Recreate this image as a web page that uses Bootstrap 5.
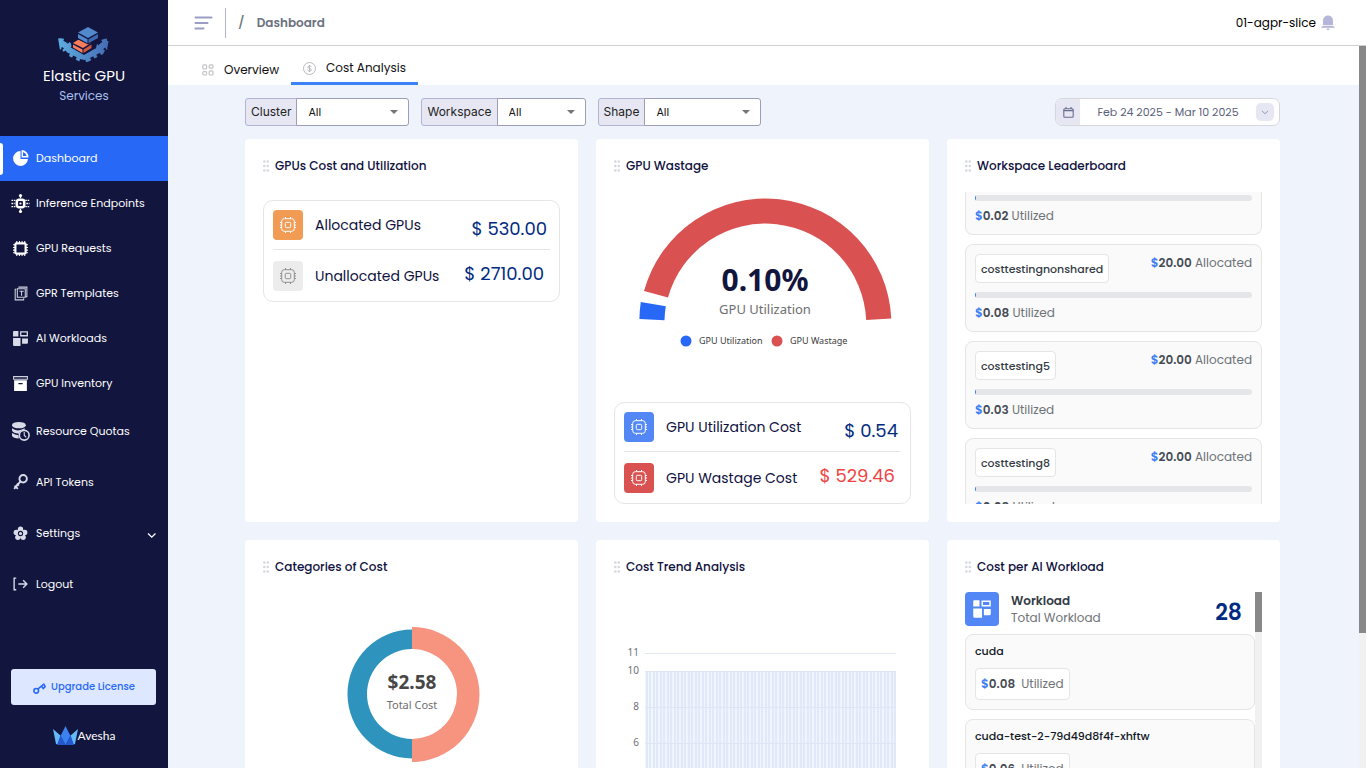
<!DOCTYPE html>
<html lang="en">
<head>
<meta charset="utf-8">
<meta name="viewport" content="width=device-width, initial-scale=1">
<title>Elastic GPU Services - Cost Analysis</title>
<link rel="stylesheet" href="https://cdn.jsdelivr.net/npm/bootstrap@5.3.0/dist/css/bootstrap.min.css">
<style>
:root{--navy:#12153d;--blue:#2769f6;--price:#002b80;--line:#e5e5e5}
body{font-family:Poppins,Inter,"Open Sans",sans-serif;font-size:12px;line-height:18px;color:#0f1140;background:#eff4fc}
.sidebar{width:168px;background:var(--navy);color:#fff}
.brand{height:136px;padding-top:26px}
.brand-name{font-size:15px;line-height:24px}
.brand-sub{font-size:12px;line-height:16px;color:#a9bfec}
.side-link{height:45px;padding:0 12px 1px;gap:7px;color:#fff;font-size:11px;text-decoration:none}
.side-link svg{width:17px;height:17px;flex:none;overflow:visible}
.side-link.tall{height:51px}
.side-link.active{background:var(--blue);position:relative}
.side-link.active::before{content:"";position:absolute;left:0;top:7px;bottom:6px;width:3px;background:#fff;border-radius:0 3px 3px 0}
.soft{color:#d9dbe8}
.upgrade{height:36px;margin:0 12px 0 11px;background:#dde7ff;color:var(--blue);border:0;border-radius:3px;font-size:10px;font-weight:500}
.avesha{height:63px;padding-bottom:1px;font-family:Lato,sans-serif;font-size:12px}
.topbar{height:46px;border-bottom:1px solid #d0d0d0;padding:0 30px 0 26px}
.topbar .rule{width:1px;height:30px;background:#b3b3d6;margin:0 12px}
.slash{font-size:13px;font-weight:500}
.crumb{color:#6c7280;font-weight:600}
.tabs{height:39px;padding-left:22px}
.tab{color:#111;text-decoration:none;height:39px;padding:0 12px;gap:10px}
.tab.active{border-bottom:3px solid #3b82f6}
.scrollrail{width:7px;background:#f1f1f1}
.scrollrail div{background:#888;height:587px}
.content{padding:13px 79px 0 77px}
.filters{gap:12px;margin-bottom:13px}
.filter{height:28px;width:auto}
.filter label{background:#e6e7f3;border:1px solid #b3b3d3;border-radius:3px 0 0 3px;padding:0 5px;color:#222;font-family:Inter,sans-serif}
.filter .form-select{flex:none;border:1px solid #9d9eb6;border-radius:3px;margin-left:-1px;padding:0 11px;font-size:11px;line-height:16px;color:#111;background:#fff url("data:image/svg+xml,%3Csvg xmlns='http://www.w3.org/2000/svg' viewBox='0 0 8 5'%3E%3Cpath d='M0 0h8L4 4z' fill='%23757575'/%3E%3C/svg%3E") no-repeat right 10px center/8px 5px}
.filter .sel-a{width:113px}.filter .sel-b{width:89px}.filter .sel-c{width:117px}
.daterange{width:225px;height:28px;border:1px solid #d6d7db;border-radius:7px;background:#fff;color:#5b5f7b;font-size:11px;padding:0;overflow:hidden}
.daterange .cal{width:24px;height:100%;background:#e6e7f3}
.daterange .chev{width:18px;height:18px;border-radius:5px;background:#e6e7f3;margin-right:5px}
.board{--bs-gutter-x:18px;--bs-gutter-y:18px}
.panel{background:#fff;border-radius:4px;height:383px;padding:18px}
.panel h2{font-size:12px;line-height:18px;font-weight:500;margin:0;gap:6px}
.panel h2 svg{width:6px;height:12px;fill:#d5d7df}
.costbox{border:1px solid var(--line);border-radius:10px;padding:0 9px}
.costrow{height:48px}
.costrow + .costrow{height:52px;border-top:1px solid var(--line)}
.costrow .name{font-size:14px}
.costrow .price{font-size:18px;color:var(--price);padding:8px 3px 0 0}
.costrow + .costrow .price{padding:0 6px 4px 0}
.costrow .price.lost{color:#f04444}
.tile{width:30px;height:30px;border-radius:4px;color:#fff;margin-right:12px}
.orange{background:#f29b55}.grey{background:#ececec;color:#909090}.sky{background:#5287f5}.red{background:#d95151}
.mt-box{margin-top:25px}
.chart{font-family:"Noto Sans","Open Sans",sans-serif}
.board-list{height:312px;margin-top:17px;gap:9px;overflow:hidden}
.entry{flex:none;background:#fafafa;border:1px solid var(--line);border-radius:8px;padding:9px;color:#6e7277}
.entry.cut{border-top:0;border-radius:0 0 8px 8px;padding-top:3px}
.entry b{font-weight:600;color:#454b54}
.entry b i{font-style:normal;color:#3b7df6}
.chip{background:#fff;border:1px solid var(--line);border-radius:4px;height:29px;padding:0 5px;font-size:11px;font-weight:500;color:#353b44}
.meter{height:6px;background:#e5e6ea;border-radius:3px;overflow:hidden}
.meter div{height:6px;background:#3b82f6}
.entry .meter{margin:9px 0 6px}
.entry.cut .meter{margin-top:0}
.work{height:313px;margin-top:16px;overflow:hidden}
.work .tile{width:34px;height:34px}
.work .caption{color:#6e7277;line-height:17px}
.work .caption div{color:#333a45;font-weight:600}
.work .total{font-size:22px;height:34px;line-height:42px;font-weight:600;color:var(--price);margin-right:13px}
.work .entry{margin-top:8px;height:76px;padding-top:8px}
.work .entry + .entry{margin-top:9px}
.work .entry h3{font-size:11px;line-height:16px;font-weight:500;color:#111827;margin:0 0 9px}
.work .chip{height:32px;font-size:12px;font-weight:400;color:#6e7277;gap:6px}
.work .scrollrail div{height:40px}
</style>
</head>
<body class="vh-100 overflow-hidden d-flex">
<svg class="d-none" xmlns="http://www.w3.org/2000/svg">
  <symbol id="grip" viewBox="0 0 6 12"><circle cx="1.3" cy="1.5" r="1.3"/><circle cx="4.8" cy="1.5" r="1.3"/><circle cx="1.3" cy="6" r="1.3"/><circle cx="4.8" cy="6" r="1.3"/><circle cx="1.3" cy="10.5" r="1.3"/><circle cx="4.8" cy="10.5" r="1.3"/></symbol>
  <symbol id="cpu" viewBox="0 0 16 16"><g fill="none" stroke="currentColor"><rect x="1.7" y="1.7" width="12.6" height="12.6" rx="2.6"/><rect x="5.3" y="5.3" width="5.4" height="5.4" rx="1"/><path d="M5.5 0v1.7M10.5 0v1.7M5.5 14.3V16M10.5 14.3V16M0 5.5h1.7M0 8h1.7M0 10.5h1.7M14.3 5.5H16M14.3 8H16M14.3 10.5H16"/></g></symbol>
  <symbol id="blocks" viewBox="0 0 16 16"><path fill="currentColor" d="M1.500 1H6v5H1V1.500zM1 7.500h7V15H2a1 1 0 0 1-1-1zM9.500 8H15v4a1 1 0 0 1-1 1H9.500z"/><path fill="none" stroke="currentColor" stroke-width="1.200" d="M8.200 1.800h6.200v3.600H8.200z"/></symbol>
</svg>

<aside class="sidebar d-flex flex-column flex-shrink-0 vh-100">
  <div class="brand text-center">
    <svg width="54" height="38" viewBox="0 0 54 38" class="d-block mx-auto">
      <defs><linearGradient id="gear" gradientUnits="userSpaceOnUse" x1="0" y1="0" x2="54" y2="0"><stop stop-color="#5eaee0"/><stop offset="1" stop-color="#4468b2"/></linearGradient></defs>
      <g fill="none" stroke="url(#gear)"><path stroke-width="6" d="M3 18Q8 17 12 24L22 29Q27 33 32 29L42 24Q46 17 51 18"/><path stroke-width="11" stroke-dasharray="3.500 4" d="M2 18Q8 17 12 24L22 29Q27 33 32 29L42 24Q46 17 52 18"/></g>
      <path fill="#12153d" d="M14 18l13-6 13 6-1 4-12 7-12-7z"/>
      <path fill="#fa7d5b" d="M16 17l8-5 10 5-8 5zM16 18.500l9.500 5V27L16 21.500z"/><path fill="#cf5843" d="M26.500 23.500l8-5v3.500l-8 5z"/>
      <path fill="#12153d" d="M20 6v7l11 5.500 12-5V6z"/>
      <path fill="#5288cc" d="M21 6.500L31 1l10 5.500-10 5.500zM21 8l9.500 5.200v4L21 12z"/><path fill="#3d68b0" d="M31.500 13.200L41 8v4l-9.500 5.200z"/>
    </svg>
    <div class="brand-name">Elastic GPU</div>
    <div class="brand-sub">Services</div>
  </div>
  <nav class="d-flex flex-column">
    <a href="#" class="side-link active d-flex align-items-center"><svg viewBox="0 0 16 16" fill="#fff"><path d="M8 1a7 7 0 1 0 7 7.500H8zM9 0v7h6.500A6.500 6.500 0 0 0 9 0zm1.400 1.800a5 5 0 0 1 3.400 3.800h-3.400z" fill-rule="evenodd"/></svg>Dashboard</a>
    <a href="#" class="side-link d-flex align-items-center"><svg viewBox="0 0 16 16"><rect x="4.500" y="4.500" width="7" height="7" rx="2" fill="none" stroke="#fff" stroke-width="2.400"/><circle cx="8" cy="8" r="1" fill="#fff"/><path d="M8 0v3M8 13v3" stroke="#fff" stroke-width="1.200"/><path d="M-.5 5h4M-.5 8h3M-.5 11h4M12.500 5h4M13.500 8h3M12.500 11h4" stroke="#fff" stroke-dasharray="1.500 .7" stroke-width="1.200"/><circle cx="8" cy=".5" r="1.500" fill="#fff"/><circle cx="8" cy="15.500" r="1.500" fill="#fff"/></svg>Inference Endpoints</a>
    <a href="#" class="side-link d-flex align-items-center"><svg viewBox="0 0 16 16" fill="none" stroke="#fff"><rect x="3.200" y="3.200" width="9.600" height="9.600" rx="1" stroke-width="2"/><path d="M4.500 1v2M7 1v2M9.500 1v2M12 1v2M4.500 13v2M7 13v2M9.500 13v2M12 13v2M1 4.500h2M1 7h2M1 9.500h2M1 12h2M13 4.500h2M13 7h2M13 9.500h2M13 12h2"/></svg>GPU Requests</a>
    <a href="#" class="side-link d-flex align-items-center"><svg viewBox="0 0 16 16" fill="none" stroke="#cfd1de"><path d="M6 2h8v9h-2M4 4H3v10h8v-1.500M5 3.500h7.500v8H5zM7 5.800h4M9 5.800V10"/></svg>GPR Templates</a>
    <a href="#" class="side-link d-flex align-items-center"><svg viewBox="0 0 16 16" class="soft"><use href="#blocks"/></svg>AI Workloads</a>
    <a href="#" class="side-link d-flex align-items-center"><svg viewBox="0 0 16 16"><path d="M1.500 1.500h13v2.500h-13z" fill="none" stroke="#cfd1de"/><path fill="#fff" fill-rule="evenodd" d="M2 5h12v10H2zM6 7.500v1.200h4V7.500z"/></svg>GPU Inventory</a>
    <a href="#" class="side-link tall d-flex align-items-center"><svg viewBox="0 0 16 16" fill="#d9dbe8"><ellipse cx="6.500" cy="2" rx="6.500" ry="3"/><path d="M0 5q5 4 12 0v1Q7 7 6.500 10 1 9.500 0 7zM0 9.500q3 2 6 2l.5 3Q1 14.500 0 12z"/><circle cx="11.500" cy="11.500" r="4.600" fill="none" stroke="#d9dbe8" stroke-width="1.500"/><path d="M11.500 8.500v3l1.800 2" fill="none" stroke="#d9dbe8"/></svg>Resource Quotas</a>
    <a href="#" class="side-link tall d-flex align-items-center"><svg viewBox="0 0 16 16" fill="none" stroke="#d9dbe8" stroke-width="1.800"><circle cx="10.500" cy="4.500" r="3.500"/><path d="M8 7l-6 7M2.500 11l3 3M4.500 9l2 2"/></svg>API Tokens</a>
    <a href="#" class="side-link tall d-flex align-items-center"><svg viewBox="0 0 16 16"><g fill="#d9dbe8"><circle cx="8" cy="4" r="2.500"/><circle cx="4" cy="7" r="2.500"/><circle cx="12" cy="7" r="2.500"/><circle cx="5.500" cy="11.500" r="2.500"/><circle cx="10.500" cy="11.500" r="2.500"/><circle cx="8" cy="8" r="4"/></g><circle cx="8" cy="8" r="2" fill="none" stroke="#12153d"/></svg><span class="flex-grow-1">Settings</span><svg viewBox="0 0 16 16" fill="none" stroke="#fff" stroke-width="1.200"><path d="M8.500 8l3.500 3.500L15.500 8"/></svg></a>
    <a href="#" class="side-link tall d-flex align-items-center"><svg viewBox="0 0 16 16" fill="none" stroke="#d9dbe8" stroke-width="1.300"><path d="M4 2H2v11h2M6 7.500h8M10.500 4L14 7.500 10.500 11"/></svg>Logout</a>
  </nav>
  <button type="button" class="upgrade mt-auto d-flex align-items-center justify-content-center gap-1"><svg width="15" height="15" viewBox="0 0 16 16" fill="none" stroke="#2769f6" stroke-width="1.700"><circle cx="4.500" cy="11.500" r="2.500"/><path d="M6.500 9.500L13 4M10 6.500l2 2.500 2-2-1.500-3"/></svg>Upgrade License</button>
  <div class="avesha d-flex align-items-center justify-content-center"><svg width="25" height="20" viewBox="0 0 25 20"><path fill="#66b8f7" d="M0 3l8 7-1 9-4-1zM25 3l-8 7 1 9 4-1z"/><path fill="#3b82f0" d="M12.500 0l5 10-5 9-5-9z"/><path fill="#2359cf" d="M7.500 9l5 10H4zM17.500 9l-5 10H21z"/></svg>Avesha</div>
</aside>

<div class="flex-grow-1 d-flex flex-column vh-100">
  <header class="topbar bg-white d-flex align-items-center flex-shrink-0">
    <button type="button" class="btn p-0 border-0 lh-1" aria-label="Toggle menu"><svg width="19" height="14" viewBox="0 0 19 14" stroke="#9a9dc4" stroke-width="2" stroke-linecap="round"><path d="M1.500 1.500h16M1.500 7h12M1.500 12.500h8"/></svg></button>
    <span class="rule"></span>
    <span class="slash text-secondary me-2">/</span>
    <span class="crumb ms-1">Dashboard</span>
    <span class="ms-auto text-black me-1">01-agpr-slice</span>
    <svg width="16" height="16" viewBox="0 0 16 16" fill="#b5b5d8"><path d="M8 .5A5 5 0 0 0 3 5.500V10h10V5.500A5 5 0 0 0 8 .5zM3 10.700L.8 12.700h14.400L13 10.700zM6.500 13.500h3a1.500 1.800 0 0 1-3 0z"/></svg>
  </header>
  <div class="d-flex flex-grow-1 overflow-hidden">
    <main class="flex-grow-1">
      <nav class="tabs bg-white d-flex">
        <a href="#" class="tab d-flex align-items-center pt-2"><svg width="12" height="12" viewBox="0 0 12 12" fill="none" stroke="#c3c3c7" stroke-width="1.200"><rect x=".8" y=".8" width="3.800" height="4.200" rx="1"/><rect x="7.200" y=".8" width="3.800" height="3.400" rx="1"/><rect x=".8" y="7.600" width="3.800" height="3.400" rx="1"/><rect x="7.200" y="6.800" width="3.800" height="4.200" rx="1"/></svg>Overview</a>
        <a href="#" class="tab active d-flex align-items-center pt-2"><svg width="13" height="13" viewBox="0 0 13 13" fill="none" stroke="#b9b9be"><circle cx="6.500" cy="6.500" r="6"/><path d="M8.500 4.800C8 3.600 4.800 3.600 4.800 5.200s3.600 1 3.600 2.700S5 9.300 4.500 8M6.500 3v7"/></svg>Cost Analysis</a>
      </nav>
      <div class="content">
        <form class="filters d-flex">
          <div class="filter input-group flex-nowrap"><label class="d-flex align-items-center" for="cluster">Cluster</label><select id="cluster" class="form-select sel-a"><option>All</option></select></div>
          <div class="filter input-group flex-nowrap"><label class="d-flex align-items-center" for="workspace">Workspace</label><select id="workspace" class="form-select sel-b"><option>All</option></select></div>
          <div class="filter input-group flex-nowrap"><label class="d-flex align-items-center" for="shape">Shape</label><select id="shape" class="form-select sel-c"><option>All</option></select></div>
          <button type="button" class="daterange ms-auto d-flex align-items-center">
            <span class="cal d-flex align-items-center justify-content-center"><svg width="11" height="11" viewBox="0 0 11 11" fill="none" stroke="#6a6d8e" stroke-width="1.100"><rect x=".8" y="1.800" width="9.400" height="8.400" rx="1"/><path d="M.8 3.600h9.400M3 0v2M8 0v2"/></svg></span>
            <span class="flex-grow-1 text-center">Feb 24 2025 - Mar 10 2025</span>
            <span class="chev d-flex align-items-center justify-content-center"><svg width="8" height="5" viewBox="0 0 8 5" fill="none" stroke="#9093b5"><path d="M1 .8l3 3 3-3"/></svg></span>
          </button>
        </form>
        <div class="row row-cols-3 board">
          <div class="col"><section class="panel">
            <h2 class="d-flex align-items-center"><svg><use href="#grip"/></svg>GPUs Cost and Utilization</h2>
            <div class="costbox mt-box">
              <div class="costrow d-flex align-items-center"><span class="tile orange d-flex align-items-center justify-content-center"><svg width="16" height="16"><use href="#cpu"/></svg></span><span class="name">Allocated GPUs</span><span class="price ms-auto">$ 530.00</span></div>
              <div class="costrow d-flex align-items-center"><span class="tile grey d-flex align-items-center justify-content-center"><svg width="16" height="16"><use href="#cpu"/></svg></span><span class="name">Unallocated GPUs</span><span class="price ms-auto">$ 2710.00</span></div>
            </div>
          </section></div>
          <div class="col"><section class="panel d-flex flex-column">
            <h2 class="d-flex align-items-center"><svg><use href="#grip"/></svg>GPU Wastage</h2>
            <svg class="chart w-100" height="180" viewBox="0 0 297 180" text-anchor="middle">
              <path fill="#d95151" d="M30 116A126 126 0 0 1 277.300 143.500L252.200 145A101 101 0 0 0 54 122.500z"/>
              <path fill="#2769f6" d="M26.800 127L51.800 131.200A101 101 0 0 0 50.500 145.300L25.400 144A126 126 0 0 1 26.800 127z"/>
              <text x="151" y="116" font-size="30" font-weight="700" fill="#12153d">0.10%</text>
              <text x="151" y="139" font-size="13" fill="#6e6e70">GPU Utilization</text>
              <circle cx="72" cy="166" r="5.500" fill="#2769f6"/><circle cx="163" cy="166" r="5.500" fill="#d95151"/>
              <g text-anchor="start" font-size="9" fill="#3c3c40"><text x="85" y="169">GPU Utilization</text><text x="176" y="169">GPU Wastage</text></g>
            </svg>
            <div class="costbox mt-auto">
              <div class="costrow d-flex align-items-center"><span class="tile sky d-flex align-items-center justify-content-center"><svg width="16" height="16"><use href="#cpu"/></svg></span><span class="name">GPU Utilization Cost</span><span class="price ms-auto">$ 0.54</span></div>
              <div class="costrow d-flex align-items-center"><span class="tile red d-flex align-items-center justify-content-center"><svg width="16" height="16"><use href="#cpu"/></svg></span><span class="name">GPU Wastage Cost</span><span class="price lost ms-auto">$ 529.46</span></div>
            </div>
          </section></div>
          <div class="col"><section class="panel">
            <h2 class="d-flex align-items-center"><svg><use href="#grip"/></svg>Workspace Leaderboard</h2>
            <div class="board-list d-flex flex-column">
              <div class="entry cut"><div class="meter"><div style="width:.4%"></div></div><div><b><i>$</i>0.02</b> Utilized</div></div>
              <div class="entry"><div class="d-flex justify-content-between"><span class="chip d-flex align-items-center">costtestingnonshared</span><span><b><i>$</i>20.00</b> Allocated</span></div><div class="meter"><div style="width:.4%"></div></div><div><b><i>$</i>0.08</b> Utilized</div></div>
              <div class="entry"><div class="d-flex justify-content-between"><span class="chip d-flex align-items-center">costtesting5</span><span><b><i>$</i>20.00</b> Allocated</span></div><div class="meter"><div style="width:.4%"></div></div><div><b><i>$</i>0.03</b> Utilized</div></div>
              <div class="entry"><div class="d-flex justify-content-between"><span class="chip d-flex align-items-center">costtesting8</span><span><b><i>$</i>20.00</b> Allocated</span></div><div class="meter"><div style="width:.4%"></div></div><div><b><i>$</i>0.08</b> Utilized</div></div>
            </div>
          </section></div>
          <div class="col"><section class="panel">
            <h2 class="d-flex align-items-center"><svg><use href="#grip"/></svg>Categories of Cost</h2>
            <svg class="chart w-100" height="200" viewBox="0 0 297 200" text-anchor="middle">
              <path fill="#2e94be" d="M149 53.500A64.500 64.500 0 0 0 149 182.500V163A45 45 0 0 1 149 73z"/>
              <path fill="#f69480" d="M149 51A67.500 67.500 0 0 1 149 186V163A45 45 0 0 0 149 73z"/>
              <text x="149" y="113" font-size="19" font-weight="700" fill="#464646">$2.58</text>
              <text x="149" y="133" font-size="11" fill="#6e6e70">Total Cost</text>
            </svg>
          </section></div>
          <div class="col"><section class="panel">
            <h2 class="d-flex align-items-center"><svg><use href="#grip"/></svg>Cost Trend Analysis</h2>
            <svg class="chart w-100" height="260" viewBox="0 0 297 260">
              <defs><pattern id="bars" width="7" height="10" patternUnits="userSpaceOnUse"><path fill="#f1f5fd" d="M0 0h7v10H0z"/><path fill="#e1e8fa" d="M0 0h2v10H0zM4 0h2v10H4z"/></pattern></defs>
              <rect x="31" y="95" width="251" height="165" fill="url(#bars)"/>
              <path stroke="#e0e6f1" d="M31 77.500h251M31 95.500h251M31 131.500h251M31 167.500h251"/>
              <g font-size="10" fill="#6e7079" text-anchor="end"><text x="25" y="80">11</text><text x="25" y="98">10</text><text x="25" y="134">8</text><text x="25" y="170">6</text></g>
            </svg>
          </section></div>
          <div class="col"><section class="panel">
            <h2 class="d-flex align-items-center"><svg><use href="#grip"/></svg>Cost per AI Workload</h2>
            <div class="work d-flex">
              <div class="flex-grow-1">
                <div class="d-flex align-items-center"><span class="tile sky d-flex align-items-center justify-content-center flex-shrink-0"><svg width="20" height="20"><use href="#blocks"/></svg></span><div class="caption"><div>Workload</div>Total Workload</div><span class="total ms-auto">28</span></div>
                <div class="entry"><h3>cuda</h3><span class="chip d-inline-flex align-items-center"><b><i>$</i>0.08</b> Utilized</span></div>
                <div class="entry"><h3>cuda-test-2-79d49d8f4f-xhftw</h3><span class="chip d-inline-flex align-items-center"><b><i>$</i>0.06</b> Utilized</span></div>
              </div>
              <div class="scrollrail"><div></div></div>
            </div>
          </section></div>
        </div>
      </div>
    </main>
    <div class="scrollrail flex-shrink-0"><div></div></div>
  </div>
</div>
<script src="https://cdn.jsdelivr.net/npm/bootstrap@5.3.0/dist/js/bootstrap.bundle.min.js"></script>
</body>
</html>
